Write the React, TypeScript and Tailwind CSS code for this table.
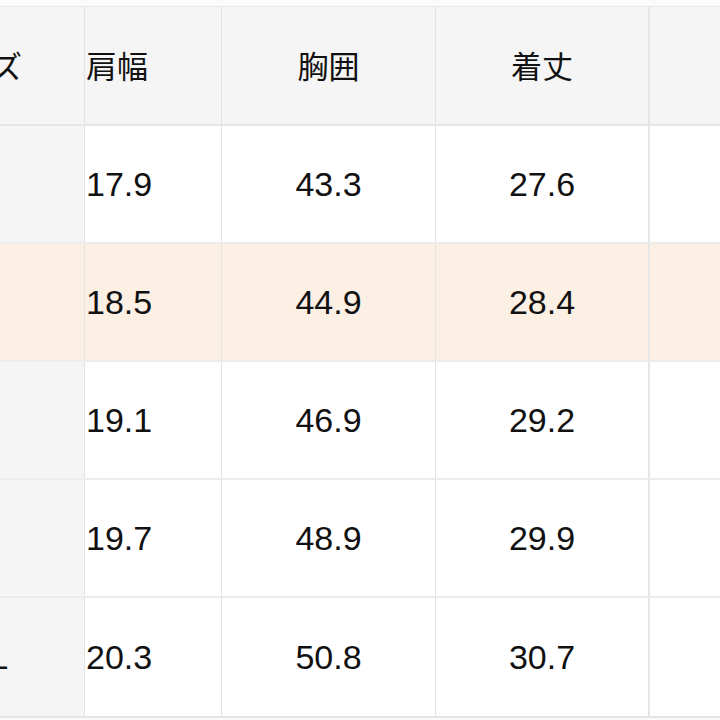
const columns = ["サイズ", "肩幅", "胸囲", "着丈", "袖丈"];

const rows = [
  { size: "S", values: ["17.9", "43.3", "27.6", "58.5"] },
  { size: "M", values: ["18.5", "44.9", "28.4", "60.0"] },
  { size: "L", values: ["19.1", "46.9", "29.2", "11.5"] },
  { size: "XL", values: ["19.7", "48.9", "29.9", "62.5"] },
  { size: "XXL", values: ["20.3", "50.8", "30.7", "63.5"] },
];

// the chart is scrolled sideways: first column sits over the left part of the second
const widths = ["w-[85px]", "w-[137px]", "w-[214px]", "w-[214px]", "w-[208px]"];
const borders = [
  "border-r border-[#e3e3e3]",
  "border-r border-[#e3e3e3]",
  "border-r border-[#e3e3e3]",
  "border-r-2 border-[#e6e6e6]",
  "",
];

function Cell({ index, children }: { index: number; children?: React.ReactNode }) {
  if (index === 0) {
    return (
      <div className={`${widths[0]} ${borders[0]} shrink-0 h-full overflow-hidden`}>
        <div className="w-[210px] -ml-[129px] h-full flex items-center justify-center">
          {children}
        </div>
      </div>
    );
  }
  const align = index === 1 ? "justify-start pl-px" : "justify-center";
  return (
    <div className={`${widths[index]} ${borders[index]} shrink-0 h-full flex items-center ${align}`}>
      {children}
    </div>
  );
}

export default function App() {
  return (
    <div
      className="w-[720px] h-[720px] overflow-hidden bg-[#fbfbfb] pt-[6px] text-[#111]"
      style={{ fontFamily: '"Liberation Sans", "Noto Sans CJK JP", sans-serif' }}
    >
      <div className="border-t border-[#e8e8e8] border-b-2 border-b-[#e4e4e4]">
        <div className="flex h-[119px] bg-[#f5f5f5] border-b-2 border-[#e6e6e6]">
          {columns.map((c, i) => (
            <Cell key={c} index={i}>
              <span
                className="text-[31px] whitespace-nowrap"
                style={{ fontFamily: '"Noto Sans CJK JP", sans-serif' }}
              >
                {c}
              </span>
            </Cell>
          ))}
        </div>
        {rows.map((r, ri) => {
          const hl = ri === 1;
          return (
            <div
              key={r.size}
              className={`flex h-[118px] ${ri < rows.length - 1 ? "border-b-2 border-[#ececec]" : ""} ${
                hl ? "bg-[#fcefe4]" : "bg-white"
              }`}
            >
              <div className={`${hl ? "" : "bg-[#f5f5f5]"} flex h-full`}>
                <Cell index={0}>
                  <span className="text-[34px] whitespace-nowrap">{r.size}</span>
                </Cell>
              </div>
              {r.values.map((v, vi) => (
                <Cell key={vi} index={vi + 1}>
                  <span className="text-[34px] whitespace-nowrap">{v}</span>
                </Cell>
              ))}
            </div>
          );
        })}
      </div>
    </div>
  );
}
